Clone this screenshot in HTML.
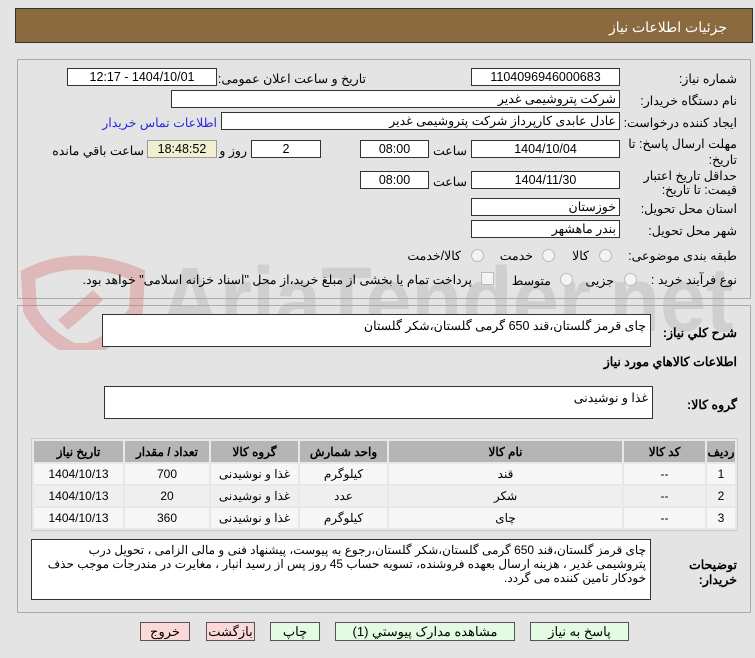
<!DOCTYPE html>
<html><head><meta charset="utf-8"><style>
body{margin:0;width:755px;height:658px;background:#e4e4e4;font-family:"Liberation Sans","Noto Sans CJK SC",sans-serif;font-size:12.5px;color:#000;position:relative;overflow:hidden;direction:rtl}
.a{position:absolute;white-space:nowrap}
.box{position:absolute;background:#fff;border:1px solid #333;box-sizing:border-box;height:18px;line-height:16px;padding:0 3px;text-align:center;white-space:nowrap}
.l{text-align:right}
.lbl{position:absolute;right:18px;text-align:right;white-space:nowrap}
.b{font-weight:bold}
.rad{position:absolute;width:11px;height:11px;border-radius:50%;border:1px solid #bbb;background:#f4f4f4}
.ta{position:absolute;background:#fff;border:1px solid #333;box-sizing:border-box;padding:3px 4px;text-align:right;line-height:17px}
table{border-collapse:separate;border-spacing:2px;position:absolute;left:31px;top:438px;width:707px;background:#e8e8e8;border:1px solid #ccc}
td,th{text-align:center;height:20px;padding:0;font-size:12px}
th{background:#b5b5b5;height:21px}
tr.r1 td{background:#f7f7f7}tr.r2 td{background:#efefef}
.btn{position:absolute;top:622px;height:19px;box-sizing:border-box;border:1px solid #555;text-align:center;line-height:17px;font-size:13px}
.g{background:#e2fbe2}.p{background:#fbd9d9}
</style></head><body>
<div class="a" style="left:15px;top:8px;width:738px;height:35px;background:#8b6a40;border:1px solid #333;box-sizing:border-box"></div>
<div class="a" style="right:28px;top:19px;color:#fff;font-size:14px">جزئیات اطلاعات نیاز</div>
<div class="a" style="left:17px;top:59px;width:734px;height:240px;border:1px solid #aaa;box-sizing:border-box"></div>
<div class="a" style="left:17px;top:305px;width:734px;height:308px;border:1px solid #aaa;box-sizing:border-box"></div>

<svg class="a" style="left:18px;top:250px" width="130" height="100" viewBox="0 0 130 100">
<path d="M10 25 Q60 0 120 25 L118 60 Q100 90 70 100 L55 100 Q25 85 12 60 Z" fill="none" stroke="rgba(215,120,120,0.4)" stroke-width="14"/>
<path d="M40 70 L75 40 L85 50 L50 80 Z" fill="rgba(215,120,120,0.4)"/>
</svg>
<div class="a" style="left:160px;top:250px;font-size:92px;line-height:100px;font-weight:bold;color:rgba(170,170,170,0.35);direction:ltr;transform:scaleX(0.9);transform-origin:left">AriaTender.net</div>

<div class="lbl" style="top:71px">شماره نیاز:</div>
<div class="box" style="left:471px;top:68px;width:149px">1104096946000683</div>
<div class="a" style="right:389px;top:71px">تاریخ و ساعت اعلان عمومی:</div>
<div class="box" style="left:67px;top:68px;width:150px">1404/10/01 - 12:17</div>

<div class="lbl" style="top:93px">نام دستگاه خریدار:</div>
<div class="box l" style="left:171px;top:90px;width:449px">شرکت پتروشیمی غدیر</div>

<div class="lbl" style="top:115px">ایجاد کننده درخواست:</div>
<div class="box l" style="left:221px;top:112px;width:399px">عادل عابدی کارپرداز شرکت پتروشیمی غدیر</div>
<div class="a" style="right:538px;top:115px;color:#2a2ae0">اطلاعات تماس خریدار</div>

<div class="lbl" style="top:136px">مهلت ارسال پاسخ: تا</div>
<div class="lbl" style="top:152px">تاریخ:</div>
<div class="box" style="left:471px;top:140px;width:149px">1404/10/04</div>
<div class="a" style="right:288px;top:143px">ساعت</div>
<div class="box" style="left:360px;top:140px;width:69px">08:00</div>
<div class="box" style="left:251px;top:140px;width:70px">2</div>
<div class="a" style="right:508px;top:143px">روز و</div>
<div class="box" style="left:147px;top:140px;width:70px;background:#f0f0d0;border-color:#999">18:48:52</div>
<div class="a" style="right:611px;top:143px">ساعت باقي مانده</div>

<div class="lbl" style="top:168px">حداقل تاریخ اعتبار</div>
<div class="lbl" style="top:182px">قیمت: تا تاریخ:</div>
<div class="box" style="left:471px;top:171px;width:149px">1404/11/30</div>
<div class="a" style="right:288px;top:174px">ساعت</div>
<div class="box" style="left:360px;top:171px;width:69px">08:00</div>

<div class="lbl" style="top:201px">استان محل تحویل:</div>
<div class="box l" style="left:471px;top:198px;width:149px">خوزستان</div>
<div class="lbl" style="top:223px">شهر محل تحویل:</div>
<div class="box l" style="left:471px;top:220px;width:149px">بندر ماهشهر</div>

<div class="lbl" style="top:248px">طبقه بندی موضوعی:</div>
<div class="rad" style="left:599px;top:249px"></div><div class="a" style="right:166px;top:248px">کالا</div>
<div class="rad" style="left:542px;top:249px"></div><div class="a" style="right:222px;top:248px">خدمت</div>
<div class="rad" style="left:471px;top:249px"></div><div class="a" style="right:294px;top:248px">کالا/خدمت</div>

<div class="lbl" style="top:272px">نوع فرآیند خرید :</div>
<div class="rad" style="left:624px;top:273px"></div><div class="a" style="right:141px;top:273px">جزیی</div>
<div class="rad" style="left:560px;top:273px"></div><div class="a" style="right:204px;top:273px">متوسط</div>
<div class="a" style="left:481px;top:272px;width:11px;height:11px;border:1px solid #bbb;background:#f4f4f4"></div>
<div class="a" style="right:283px;top:272px">پرداخت تمام یا بخشی از مبلغ خرید،از محل "اسناد خزانه اسلامی" خواهد بود.</div>

<div class="lbl b" style="top:325px">شرح کلي نیاز:</div>
<div class="ta" style="left:102px;top:314px;width:549px;height:33px">چای قرمز گلستان،قند 650 گرمی گلستان،شکر گلستان</div>
<div class="lbl b" style="top:354px">اطلاعات کالاهاي مورد نیاز</div>
<div class="lbl b" style="top:397px">گروه کالا:</div>
<div class="ta" style="left:104px;top:386px;width:549px;height:33px">غذا و نوشیدنی</div>

<table>
<tr><th style="width:28px">ردیف</th><th style="width:81px">کد کالا</th><th style="width:233px">نام کالا</th><th style="width:87px">واحد شمارش</th><th style="width:87px">گروه کالا</th><th style="width:84px">تعداد / مقدار</th><th>تاریخ نیاز</th></tr>
<tr class="r1"><td>1</td><td>--</td><td>قند</td><td>کیلوگرم</td><td>غذا و نوشیدنی</td><td>700</td><td>1404/10/13</td></tr>
<tr class="r2"><td>2</td><td>--</td><td>شکر</td><td>عدد</td><td>غذا و نوشیدنی</td><td>20</td><td>1404/10/13</td></tr>
<tr class="r1"><td>3</td><td>--</td><td>چای</td><td>کیلوگرم</td><td>غذا و نوشیدنی</td><td>360</td><td>1404/10/13</td></tr>
</table>

<div class="lbl b" style="top:557px">توضیحات</div>
<div class="lbl b" style="top:572px">خریدار:</div>
<div class="ta" style="left:31px;top:539px;width:620px;height:61px;line-height:14px;font-size:12px">چای قرمز گلستان،قند 650 گرمی گلستان،شکر گلستان،رجوع به پیوست، پیشنهاد فنی و مالی الزامی ، تحویل درب پتروشیمی غدیر ، هزینه ارسال بعهده فروشنده، تسویه حساب 45 روز پس از رسید انبار ، مغایرت در مندرجات موجب حذف خودکار تامین کننده می گردد.</div>

<div class="btn g" style="left:530px;width:99px">پاسخ به نیاز</div>
<div class="btn g" style="left:335px;width:180px">مشاهده مدارک پیوستي (1)</div>
<div class="btn g" style="left:270px;width:50px">چاپ</div>
<div class="btn p" style="left:206px;width:49px">بازگشت</div>
<div class="btn p" style="left:140px;width:50px">خروج</div>
</body></html>
